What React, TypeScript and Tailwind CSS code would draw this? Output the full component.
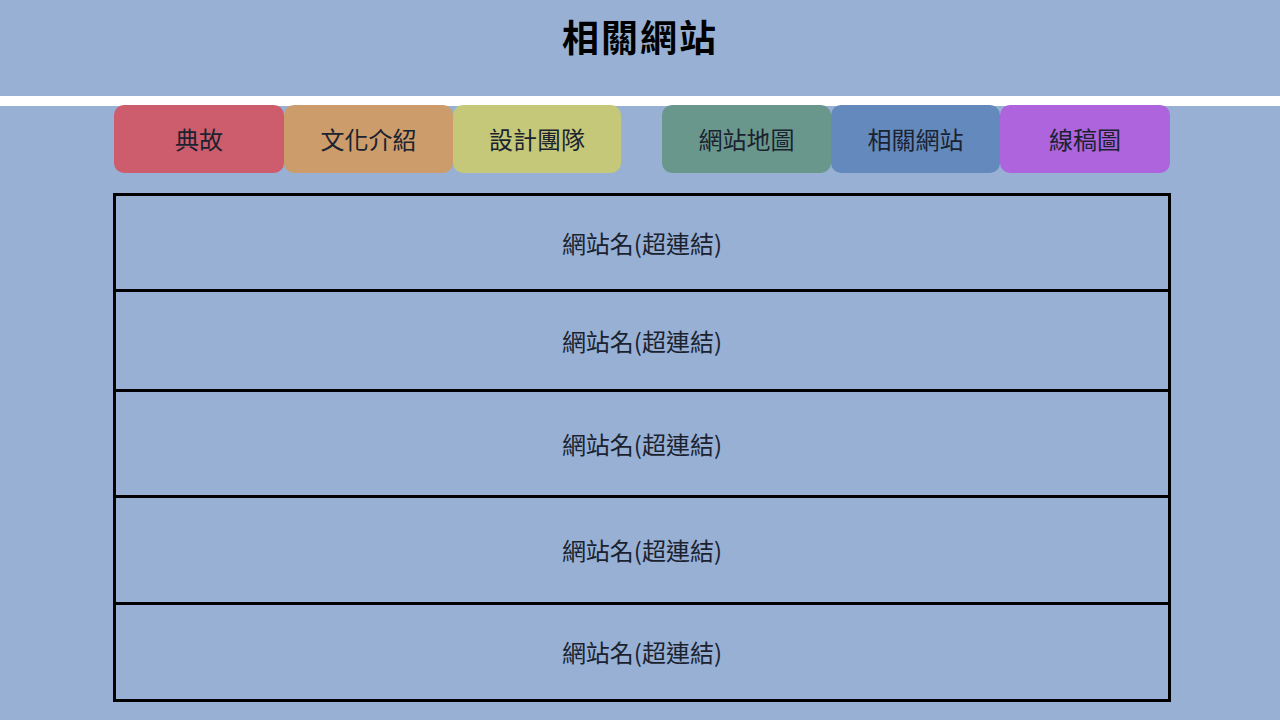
const navItems = [
  { label: "典故", bg: "bg-[#cd5c6c]", w: "w-[170px]" },
  { label: "文化介紹", bg: "bg-[#cc9c6a]", w: "w-[169px]" },
  { label: "設計團隊", bg: "bg-[#c4c878]", w: "w-[168px]" },
];

const navItemsRight = [
  { label: "網站地圖", bg: "bg-[#6a978c]", w: "w-[169px]" },
  { label: "相關網站", bg: "bg-[#6489bd]", w: "w-[169px]" },
  { label: "線稿圖", bg: "bg-[#ad64dc]", w: "w-[170px]" },
];

const rows = ["h-[96px]", "h-[100px]", "h-[106px]", "h-[107px]", "h-[94px]"];

function NavButton({ label, bg, w }: { label: string; bg: string; w: string }) {
  return (
    <a
      href="#"
      className={`${bg} ${w} h-[68px] rounded-[10px] flex items-center justify-center text-[24px] text-[#1b2230]`}
    >
      {label}
    </a>
  );
}

export default function App() {
  return (
    <div
      className="w-[1280px] h-[720px] bg-[#97b0d4] overflow-hidden"
      style={{ fontFamily: '"Noto Sans CJK TC", "Noto Sans", sans-serif' }}
    >
      {/* Header */}
      <header className="h-[96px] flex items-center justify-center pb-[22px]">
        <h1 className="text-[37px] font-bold text-black tracking-[2px]">相關網站</h1>
      </header>
      <div className="h-[10px] bg-white" />

      {/* Nav */}
      <nav className="flex pl-[114px] -mt-[1px]">
        <div className="flex">
          {navItems.map((item) => (
            <NavButton key={item.label} {...item} />
          ))}
        </div>
        <div className="flex ml-[41px]">
          {navItemsRight.map((item) => (
            <NavButton key={item.label} {...item} />
          ))}
        </div>
      </nav>

      {/* Links table */}
      <div className="mt-[20px] ml-[113px] w-[1058px] border-[3px] border-black">
        {rows.map((h, i) => (
          <div
            key={i}
            className={`${h} flex items-center justify-center ${i < rows.length - 1 ? "border-b-[3px] border-black" : ""}`}
          >
            <a href="#" className="text-[24px] text-[#1b2230]">
              網站名(超連結)
            </a>
          </div>
        ))}
      </div>
    </div>
  );
}
